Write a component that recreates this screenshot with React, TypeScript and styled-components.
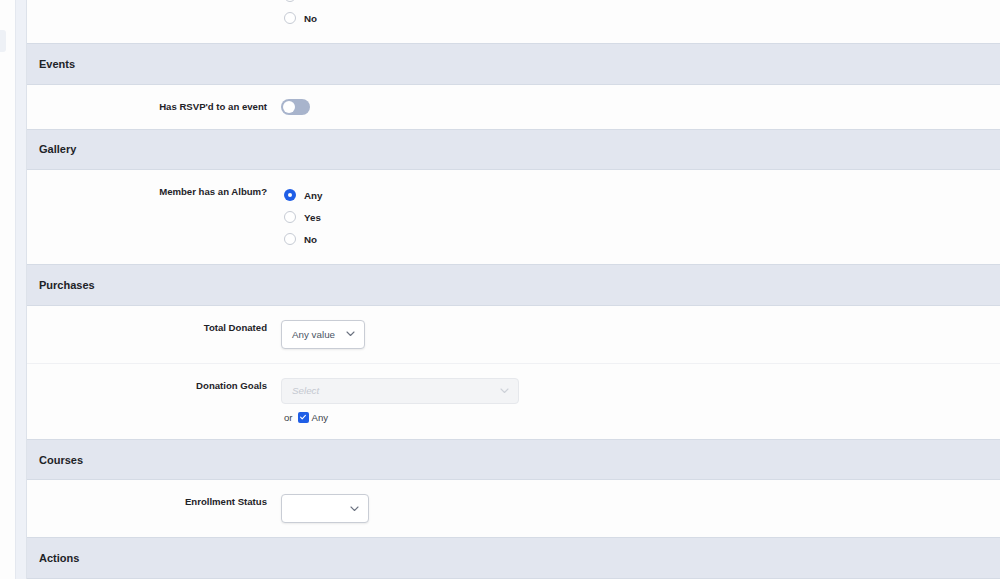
import styled, { createGlobalStyle } from "styled-components";

const GlobalStyle = createGlobalStyle`
  html, body {
    margin: 0;
    padding: 0;
    background: #fdfdfd;
    overflow: hidden;
  }
  body {
    font-family: "Liberation Sans", Arial, sans-serif;
    color: #1d2327;
  }
`;

const Page = styled.div`
  display: flex;
  height: 579px;
  overflow: hidden;
`;

const Sidebar = styled.div`
  width: 15px;
  flex-shrink: 0;
  padding-top: 30px;
  background: #fdfdfd;
`;

const SideTab = styled.div`
  width: 6px;
  height: 22px;
  background: #eef1f6;
  border-radius: 0 3px 3px 0;
`;

const Rail = styled.div`
  width: 10px;
  flex-shrink: 0;
  background: #eef1f7;
  border-left: 1px solid #e4e8ef;
  border-right: 1px solid #dde2ea;
`;

// the list is scrolled: its first row sits partly above the window
const Main = styled.div`
  flex: 1;
  display: flex;
  flex-direction: column;
  margin-top: -51px;
`;

const SectionHeader = styled.div`
  height: 40px;
  display: flex;
  align-items: center;
  padding-left: 12px;
  background: #e2e6ef;
  border-top: 1px solid #d5dbe5;
  border-bottom: 1px solid #d5dbe5;
  font-size: 11px;
  font-weight: bold;
  color: #1d2327;
`;

const Row = styled.div<{ divided?: boolean }>`
  display: grid;
  grid-template-columns: 240px 1fr;
  column-gap: 14px;
  padding: 14px 0;
  background: #fdfdfd;
  border-top: ${(p) => (p.divided ? "1px solid #f0f1f4" : "none")};
`;

const Label = styled.div`
  text-align: right;
  font-size: 9.6px;
  font-weight: bold;
  line-height: 13px;
  padding-top: 1px;
  color: #1f2328;
`;

const Control = styled.div`
  display: flex;
  flex-direction: column;
  align-items: flex-start;
`;

const RadioItem = styled.div`
  height: 22px;
  display: flex;
  align-items: center;
  gap: 8px;
  padding-left: 3px;
  font-size: 9.8px;
  font-weight: bold;
  color: #1f2328;
`;

const RadioDot = styled.span<{ checked?: boolean }>`
  width: 12px;
  height: 12px;
  box-sizing: border-box;
  border-radius: 50%;
  background: ${(p) => (p.checked ? "#1f5ee6" : "#fff")};
  border: ${(p) => (p.checked ? "none" : "1px solid #c6cbd4")};
  display: flex;
  align-items: center;
  justify-content: center;

  &::after {
    content: "";
    display: ${(p) => (p.checked ? "block" : "none")};
    width: 4px;
    height: 4px;
    border-radius: 50%;
    background: #fff;
  }
`;

const Toggle = styled.div`
  width: 29px;
  height: 16px;
  box-sizing: border-box;
  border-radius: 8px;
  background: #a8b4cc;
  padding: 2px;
  display: flex;
  align-items: center;

  &::after {
    content: "";
    width: 12px;
    height: 12px;
    border-radius: 50%;
    background: #fff;
  }
`;

const Select = styled.div<{ w: number; h: number; disabled?: boolean }>`
  width: ${(p) => p.w}px;
  height: ${(p) => p.h}px;
  box-sizing: border-box;
  display: flex;
  align-items: center;
  justify-content: space-between;
  padding: 0 9px 0 10px;
  border-radius: 4px;
  border: 1px solid ${(p) => (p.disabled ? "#e6e8ec" : "#c9cdd5")};
  background: ${(p) => (p.disabled ? "#f3f4f6" : "#fff")};
  box-shadow: ${(p) => (p.disabled ? "none" : "0 1px 2px rgba(0, 0, 0, 0.08)")};
  font-size: 9.8px;
  color: #4b5565;
`;

const Placeholder = styled.span`
  font-style: italic;
  color: #c5c9d1;
`;

const Chevron = ({ light }: { light?: boolean }) => (
  <svg width="9" height="6" viewBox="0 0 9 6" fill="none">
    <path
      d="M1 1l3.5 3.5L8 1"
      stroke={light ? "#cdd1d8" : "#6b7280"}
      strokeWidth="1.1"
      strokeLinecap="round"
      strokeLinejoin="round"
    />
  </svg>
);

const OrLine = styled.div`
  display: flex;
  align-items: center;
  gap: 5px;
  margin-top: 6px;
  padding-left: 3px;
  height: 15px;
  font-size: 9.6px;
  color: #3c434a;
`;

const CheckLabel = styled.span`
  display: flex;
  align-items: center;
  gap: 3px;
`;

const CheckBox = styled.span`
  width: 11px;
  height: 11px;
  border-radius: 2px;
  background: #1f5ee6;
  display: flex;
  align-items: center;
  justify-content: center;
`;

function Radios({ options, value }: { options: string[]; value?: string }) {
  return (
    <Control>
      {options.map((o) => (
        <RadioItem key={o}>
          <RadioDot checked={o === value} />
          {o}
        </RadioItem>
      ))}
    </Control>
  );
}

export default function App() {
  return (
    <>
      <GlobalStyle />
      <Page>
        <Sidebar>
          <SideTab />
        </Sidebar>
        <Rail />
        <Main>
          <Row>
            <Label />
            <Radios options={["Any", "Yes", "No"]} />
          </Row>

          <SectionHeader>Events</SectionHeader>
          <Row>
            <Label>Has RSVP'd to an event</Label>
            <Control>
              <Toggle />
            </Control>
          </Row>

          <SectionHeader>Gallery</SectionHeader>
          <Row>
            <Label>Member has an Album?</Label>
            <Radios options={["Any", "Yes", "No"]} value="Any" />
          </Row>

          <SectionHeader>Purchases</SectionHeader>
          <Row>
            <Label>Total Donated</Label>
            <Control>
              <Select w={84} h={29}>
                Any value
                <Chevron />
              </Select>
            </Control>
          </Row>
          <Row divided>
            <Label>Donation Goals</Label>
            <Control>
              <Select w={238} h={26} disabled>
                <Placeholder>Select</Placeholder>
                <Chevron light />
              </Select>
              <OrLine>
                or
                <CheckLabel>
                  <CheckBox>
                    <svg width="8" height="8" viewBox="0 0 8 8" fill="none">
                      <path
                        d="M1.6 4.2l1.6 1.6L6.4 2.4"
                        stroke="#fff"
                        strokeWidth="1.1"
                        strokeLinecap="round"
                        strokeLinejoin="round"
                      />
                    </svg>
                  </CheckBox>
                  Any
                </CheckLabel>
              </OrLine>
            </Control>
          </Row>

          <SectionHeader>Courses</SectionHeader>
          <Row>
            <Label>Enrollment Status</Label>
            <Control>
              <Select w={88} h={29}>
                <span />
                <Chevron />
              </Select>
            </Control>
          </Row>

          <SectionHeader>Actions</SectionHeader>
        </Main>
      </Page>
    </>
  );
}
